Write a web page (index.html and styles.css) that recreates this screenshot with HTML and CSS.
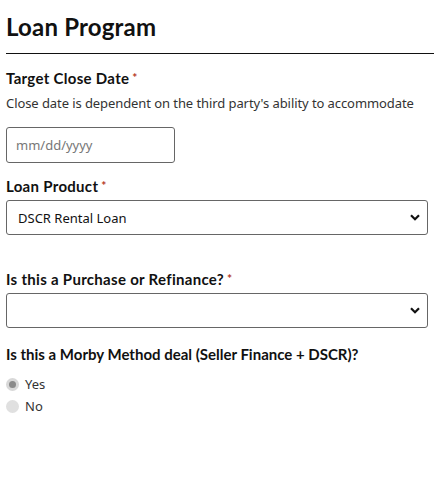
FILE: index.html
```html
<!DOCTYPE html>
<html>
<head>
<meta charset="utf-8">
<link rel="stylesheet" href="styles.css">
</head>
<body>
<div class="form">
  <h1 class="title">Loan Program</h1>
  <hr class="rule">
  <div class="field field-date">
    <label class="label">Target Close Date<span class="req">*</span></label>
    <p class="help">Close date is dependent on the third party's ability to accommodate</p>
    <div class="date-input"><span class="placeholder">mm/dd/yyyy</span></div>
  </div>
  <div class="field field-product">
    <label class="label">Loan Product<span class="req">*</span></label>
    <div class="select"><span class="select-text">DSCR Rental Loan</span><svg class="chev" width="10" height="7" viewBox="0 0 10 7"><path d="M1 1.2 L5 5.2 L9 1.2" fill="none" stroke="#111" stroke-width="2.2"/></svg></div>
  </div>
  <div class="field field-purpose">
    <label class="label">Is this a Purchase or Refinance?<span class="req">*</span></label>
    <div class="select"><span class="select-text"></span><svg class="chev" width="10" height="7" viewBox="0 0 10 7"><path d="M1 1.2 L5 5.2 L9 1.2" fill="none" stroke="#111" stroke-width="2.2"/></svg></div>
  </div>
  <div class="field field-morby">
    <label class="label label-morby">Is this a Morby Method deal (Seller Finance + DSCR)?</label>
    <div class="radios">
      <div class="radio-row"><span class="radio checked"></span><span class="radio-label">Yes</span></div>
      <div class="radio-row"><span class="radio"></span><span class="radio-label">No</span></div>
    </div>
  </div>
</div>
</body>
</html>
```
FILE: styles.css
```css
html, body { margin: 0; padding: 0; background: #fff; }
body { font-family: "Noto Sans", "Open Sans", sans-serif; color: #222; }
.form { padding: 0 0 0 6px; }
.title {
  margin: 0;
  padding-top: 12px;
  font-family: "Lato", "Noto Sans", sans-serif;
  font-weight: 700;
  font-size: 24px;
  line-height: 30px;
  color: #111;
  letter-spacing: 0.2px;
}
.rule { margin: 11px 0 0 0; border: 0; border-top: 1.5px solid #111; height: 0; }
.field { display: flex; flex-direction: column; }
.label {
  font-family: "Lato", "Noto Sans", sans-serif;
  font-weight: 700;
  font-size: 15px;
  line-height: 20px;
  color: #111;
  letter-spacing: 0.3px;
}
.label-morby { letter-spacing: 0; }
.req { color: #b5371f; font-size: 12px; margin-left: 3px; vertical-align: 2px; }
.field-date { margin-top: 14px; }
.help { margin: 6px 0 0 0; font-size: 13px; line-height: 18px; color: #333; letter-spacing: -0.08px; }
.date-input {
  margin-top: 15px;
  width: 169px; height: 36px; box-sizing: border-box;
  border: 1px solid #666; border-radius: 3px;
  display: flex; align-items: center; padding-left: 9px;
}
.placeholder { font-size: 13px; color: #777; }
.field-product { margin-top: 13px; }
.select {
  margin-top: 4px;
  width: 422px; height: 35px; box-sizing: border-box;
  border: 1px solid #666; border-radius: 3px;
  display: flex; align-items: center; justify-content: space-between;
  padding: 0 7px 0 11px;
}
.select-text { font-size: 13px; color: #111; }
.field-purpose { margin-top: 34px; }
.field-morby { margin-top: 16px; }
.radios { margin-top: 11px; display: flex; flex-direction: column; gap: 4px; }
.radio-row { display: flex; align-items: center; gap: 6px; height: 18px; }
.radio { width: 13px; height: 13px; border-radius: 50%; background: #e0e0e0; box-sizing: border-box; position: relative; }
.radio.checked { background: #d8d8d8; }
.radio.checked::after { content: ""; position: absolute; left: 3px; top: 3px; width: 7px; height: 7px; border-radius: 50%; background: #8a8a8a; }
.radio-label { font-size: 13px; color: #333; }
```
